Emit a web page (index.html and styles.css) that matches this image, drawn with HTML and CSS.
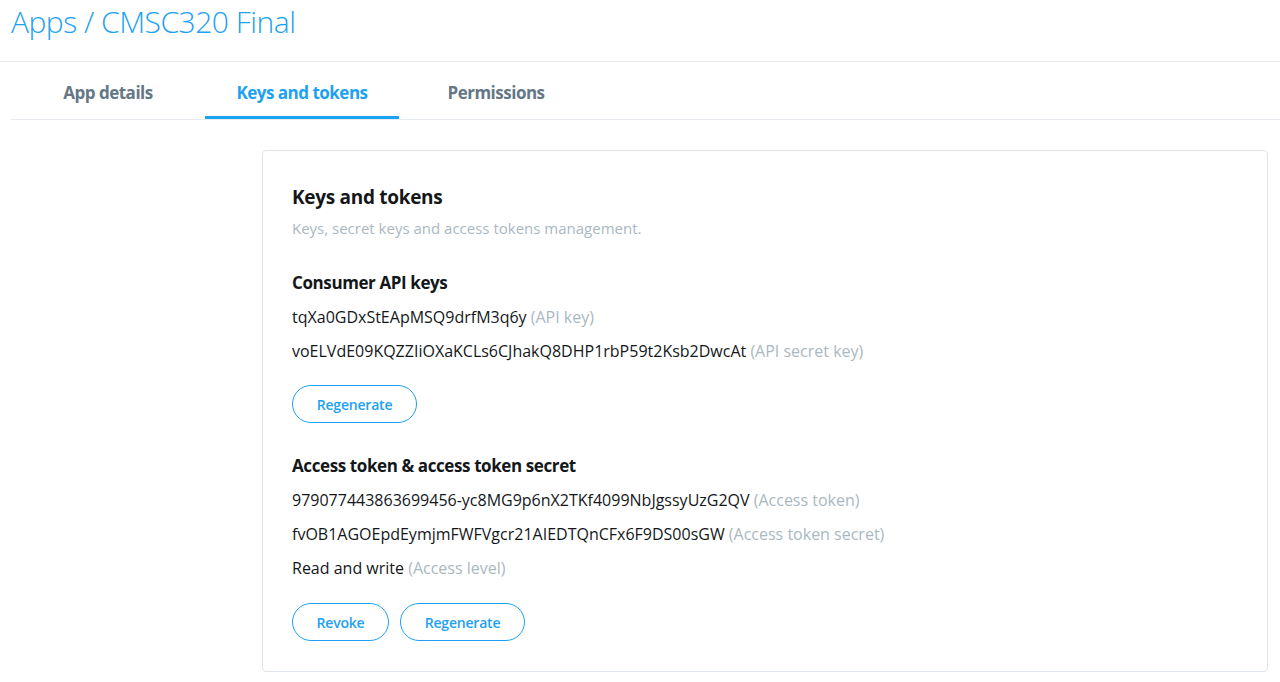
FILE: index.html
```html
<!DOCTYPE html>
<html>
<head>
<meta charset="utf-8">
<link rel="stylesheet" href="styles.css">
</head>
<body>
<header class="page-head">
  <h1 class="crumbs">Apps / CMSC320 Final</h1>
</header>
<nav class="tabs">
  <a class="tab">App details</a>
  <a class="tab active">Keys and tokens</a>
  <a class="tab">Permissions</a>
</nav>
<main class="main">
  <section class="card">
    <h2 class="card-title">Keys and tokens</h2>
    <p class="card-sub">Keys, secret keys and access tokens management.</p>

    <h3 class="sec-title">Consumer API keys</h3>
    <p class="row">tqXa0GDxStEApMSQ9drfM3q6y <span class="muted">(API key)</span></p>
    <p class="row">voELVdE09KQZZIiOXaKCLs6CJhakQ8DHP1rbP59t2Ksb2DwcAt <span class="muted">(API secret key)</span></p>
    <div class="btns">
      <button class="btn wide">Regenerate</button>
    </div>

    <h3 class="sec-title">Access token &amp; access token secret</h3>
    <p class="row">979077443863699456-yc8MG9p6nX2TKf4099NbJgssyUzG2QV <span class="muted">(Access token)</span></p>
    <p class="row">fvOB1AGOEpdEymjmFWFVgcr21AIEDTQnCFx6F9DS00sGW <span class="muted">(Access token secret)</span></p>
    <p class="row">Read and write <span class="muted">(Access level)</span></p>
    <div class="btns">
      <button class="btn narrow">Revoke</button>
      <button class="btn wide">Regenerate</button>
    </div>
  </section>
</main>
</body>
</html>
```
FILE: styles.css
```css
html, body {
  margin: 0;
  padding: 0;
  background: #fff;
  font-family: "Open Sans", "Noto Sans", sans-serif;
  color: #14171a;
}
.page-head {
  height: 62px;
  border-bottom: 1px solid #e6ecf0;
  padding-left: 11px;
  box-sizing: border-box;
}
.crumbs {
  margin: 0;
  padding-top: 2px;
  font-size: 30px;
  font-weight: 300;
  color: #1da1f2;
  line-height: 40px;
  letter-spacing: -0.5px;
}
.tabs {
  margin-left: 11px;
  display: flex;
  height: 58px;
  border-bottom: 1px solid #e6ecf0;
  box-sizing: border-box;
}
.tab {
  width: 194px;
  display: flex;
  align-items: center;
  justify-content: center;
  font-size: 17px;
  font-weight: 700;
  color: #657786;
  letter-spacing: -0.5px;
  box-sizing: border-box;
  padding-top: 3px;
  cursor: pointer;
}
.tab.active {
  color: #1da1f2;
  border-bottom: 3px solid #1da1f2;
  padding-top: 6px;
}
.main {
  padding: 30px 12px 10px 262px;
}
.card {
  border: 1px solid #dfe5ea;
  border-radius: 4px;
  padding: 30px 30px 30px 29px;
}
.card-title {
  margin: 0;
  font-size: 19px;
  font-weight: 700;
  line-height: 32px;
  letter-spacing: -0.3px;
}
.card-sub {
  margin: 4px 0 0;
  font-size: 15px;
  color: #aab8c2;
  line-height: 22px;
  letter-spacing: 0;
}
.sec-title {
  margin: 0;
  font-size: 17px;
  font-weight: 700;
  line-height: 34px;
  letter-spacing: -0.4px;
}
.card-sub + .sec-title {
  margin-top: 27px;
}
.row {
  margin: 0;
  font-size: 16px;
  line-height: 34px;
  letter-spacing: 0;
}
.muted {
  color: #aab8c2;
}
.btns {
  display: flex;
  gap: 11px;
  margin-top: 17px;
  margin-bottom: 26px;
}
.btns:last-child {
  margin-top: 18px;
  margin-bottom: 0;
}
.btn {
  height: 38px;
  border: 1px solid #1da1f2;
  border-radius: 19px;
  background: #fff;
  color: #1da1f2;
  font-family: inherit;
  font-size: 14px;
  font-weight: 600;
  letter-spacing: -0.2px;
  padding: 0;
  cursor: pointer;
}
.btn.wide { width: 125px; }
.btn.narrow { width: 97px; }
```
